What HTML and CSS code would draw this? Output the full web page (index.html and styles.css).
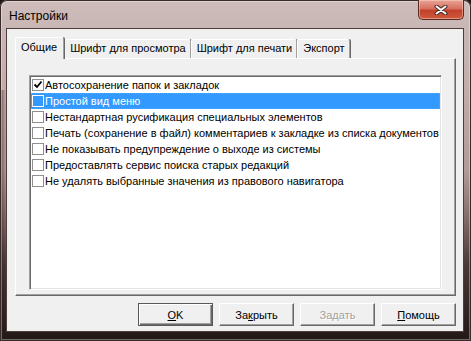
FILE: index.html
```html
<!DOCTYPE html>
<html lang="ru">
<head>
  <meta charset="UTF-8">
  <title>Настройки</title>
  <link rel="stylesheet" href="styles.css">
</head>
<body>
  <div class="window">
    <div class="titlebar">
      <span class="title">Настройки</span>
      <div class="close">
        <svg width="14" height="10" viewBox="0 0 14 10">
          <path d="M2.5 1.5 L11.5 8.5 M11.5 1.5 L2.5 8.5" stroke="#4a2a28" stroke-width="4" stroke-linecap="round"/>
          <path d="M2.5 1.5 L11.5 8.5 M11.5 1.5 L2.5 8.5" stroke="#fff" stroke-width="2" stroke-linecap="round"/>
        </svg>
      </div>
    </div>

    <div class="client">
      <div class="tabs">
        <div class="tab active">Общие</div>
        <div class="tab">Шрифт для просмотра</div>
        <div class="tab">Шрифт для печати</div>
        <div class="tab">Экспорт</div>
      </div>

      <div class="panel">
        <div class="list">
          <div class="item"><span class="check"><svg width="10" height="10" viewBox="0 0 10 10"><polyline points="1.5,4.5 4,7 8.5,1.5" fill="none" stroke="#000" stroke-width="1.8"/></svg></span>Автосохранение папок и закладок</div>
          <div class="item selected"><span class="check"></span>Простой вид меню</div>
          <div class="item"><span class="check"></span>Нестандартная русификация специальных элементов</div>
          <div class="item"><span class="check"></span>Печать (сохранение в файл) комментариев к закладке из списка документов</div>
          <div class="item"><span class="check"></span>Не показывать предупреждение о выходе из системы</div>
          <div class="item"><span class="check"></span>Предоставлять сервис поиска старых редакций</div>
          <div class="item"><span class="check"></span>Не удалять выбранные значения из правового навигатора</div>
        </div>
      </div>

      <div class="buttons">
        <div class="btn default"><u>O</u>K</div>
        <div class="btn">За<u>к</u>рыть</div>
        <div class="btn disabled">За<u>д</u>ать</div>
        <div class="btn"><u>П</u>омощь</div>
      </div>
    </div>
  </div>
</body>
</html>
```

FILE: styles.css
```css
* {
  margin: 0;
  padding: 0;
  box-sizing: border-box;
}

body {
  width: 471px;
  height: 341px;
  overflow: hidden;
  background: #1e1514;
  font-family: 'Liberation Sans', Arial, sans-serif;
  font-size: 11px;
  color: #000;
}

/* Window frame */
.window {
  width: 471px;
  height: 341px;
  display: flex;
  flex-direction: column;
  padding: 0 7px 9px 6px;
  border-radius: 7px 7px 0 0;
  background:
    linear-gradient(90deg, rgba(40, 26, 24, 0.55) 0, rgba(40, 26, 24, 0) 6px) 0 90px / 100% 251px no-repeat,
    linear-gradient(180deg, #cdbcba 0%, #c2adab 25%, #b19a98 50%, #8a7371 62%, #4a3836 78%, #221816 100%);
  box-shadow: inset 0 0 0 1px #3a2b2a, inset 0 0 0 2px rgba(255, 255, 255, 0.35);
}

.titlebar {
  height: 28px;
  display: flex;
  align-items: flex-start;
}

.title {
  padding: 9px 0 0 3px;
  font-size: 12px;
  line-height: 14px;
  color: #000;
}

.close {
  margin-left: auto;
  width: 46px;
  height: 20px;
  display: flex;
  justify-content: center;
  align-items: center;
  border: 1px solid #5a2b25;
  border-top: none;
  border-radius: 0 0 5px 5px;
  background: linear-gradient(180deg, #e8a596 0%, #d7705f 45%, #c2412c 55%, #cf5a3c 100%);
  box-shadow: inset 0 0 0 1px rgba(255, 220, 210, 0.45);
}

/* Client area */
.client {
  flex: 1;
  display: flex;
  flex-direction: column;
  padding: 8px 7px 0 8px;
  background: #f0f0f0;
  border: 1px solid #4d3e3c;
}

.tabs {
  height: 21px;
  display: flex;
  align-items: flex-end;
}

.tab {
  height: 19px;
  padding: 0 4px 0 5px;
  line-height: 17px;
  background: #f0f0f0;
  border: 1px solid #fff;
  border-bottom: none;
  border-right-color: #a0a0a0;
  border-radius: 2px 2px 0 0;
  box-shadow: 1px 0 0 #696969;
  white-space: nowrap;
}

.tab.active {
  position: relative;
  z-index: 1;
  height: 22px;
  margin-bottom: -1px;
  padding: 0 6px 0 5px;
  line-height: 19px;
}

.panel {
  height: 238px;
  padding: 16px 13px 0 13px;
  border: 1px solid;
  border-color: #fff #696969 #696969 #fff;
  box-shadow: inset -1px -1px 0 #a0a0a0;
}

/* Checked list box */
.list {
  height: 215px;
  padding: 1px;
  background: #fff;
  border: 1px solid;
  border-color: #a0a0a0 #fff #fff #a0a0a0;
  box-shadow: inset 1px 1px 0 #696969, inset -1px -1px 0 #e3e3e3;
}

.item {
  height: 16px;
  display: flex;
  align-items: center;
  white-space: nowrap;
}

.check {
  width: 12px;
  height: 12px;
  margin: 0 1px 0 1px;
  display: flex;
  justify-content: center;
  align-items: center;
  border: 1px solid #8f8f8f;
  background: #fff;
}

.item.selected {
  background: #3399ff;
  color: #fff;
  outline: 1px dotted #d08a4a;
  outline-offset: -1px;
}

.item.selected .check {
  background: transparent;
  border-color: #fff;
}

/* Dialog buttons */
.buttons {
  margin-top: 7px;
  display: flex;
  justify-content: flex-end;
  gap: 6px;
}

.btn {
  width: 75px;
  height: 23px;
  display: flex;
  justify-content: center;
  align-items: center;
  background: #f0f0f0;
  border: 1px solid;
  border-color: #fff #696969 #696969 #fff;
  box-shadow: inset -1px -1px 0 #a0a0a0;
}

.btn.default {
  border-color: #5a5a5a;
  box-shadow: inset 1px 1px 0 #fff, inset -1px -1px 0 #696969, inset -2px -2px 0 #a0a0a0;
}

.btn.disabled {
  color: #a0a0a0;
  text-shadow: 1px 1px 0 #fff;
}
```
